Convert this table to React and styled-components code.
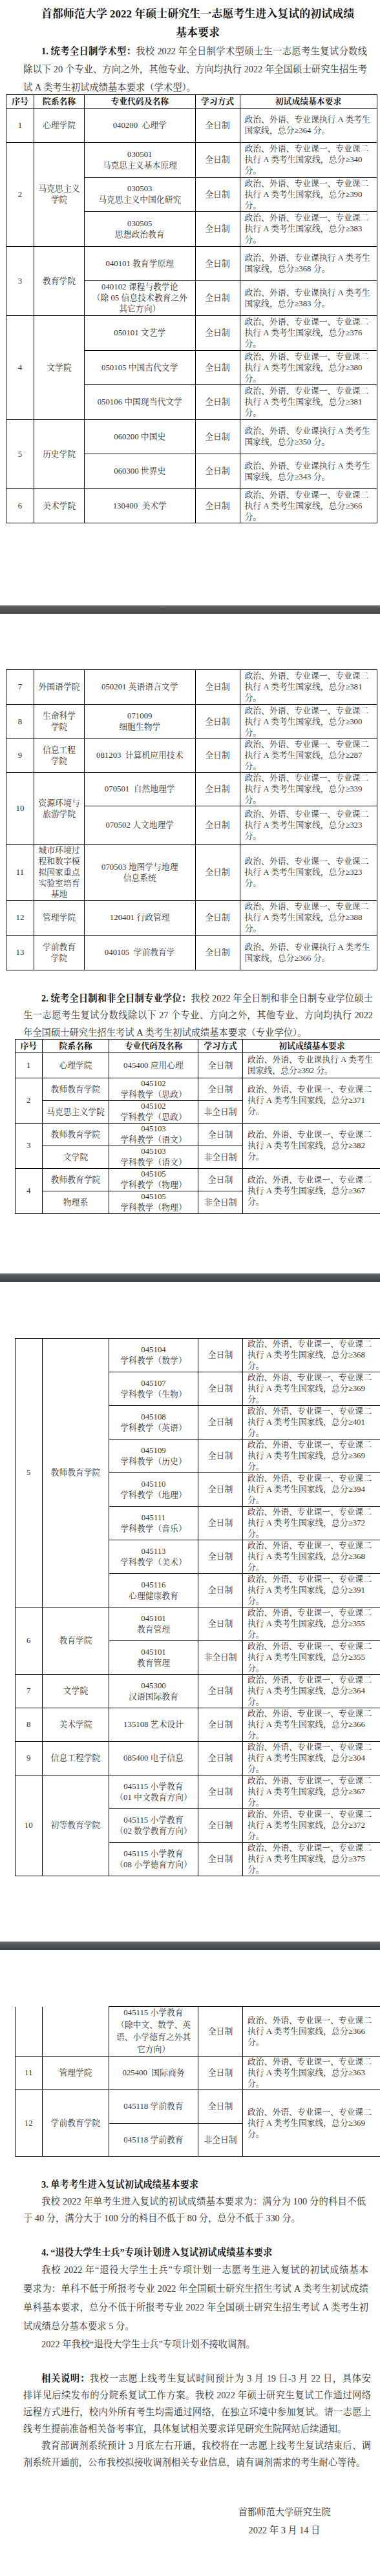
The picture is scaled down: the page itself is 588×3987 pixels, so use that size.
import React from "react";
import styled, { createGlobalStyle } from "styled-components";

const FONT = `"Liberation Serif", "Noto Serif CJK SC", "Noto Sans CJK SC", serif`;

const GlobalStyle = createGlobalStyle`
  html, body { margin: 0; padding: 0; background: #fff; }
  body { overflow-x: hidden; font-family: ${FONT}; color: #333; }
  #root { width: 588px; overflow: hidden; }
`;

const Page = styled.section`
  box-sizing: border-box;
  height: ${(p) => p.$h}px;
  padding-top: ${(p) => p.$pt}px;
  overflow: hidden;
  background: #fff;
`;

const PageGap = styled.div`
  height: 13px;
  background: linear-gradient(to bottom, #6e7174 0%, #53565a 35%, #424548 100%);
`;

const Title = styled.h1`
  margin: 0 0 0 24px;
  width: 564px;
  font-size: 17px;
  line-height: 29px;
  font-weight: 700;
  text-align: center;
  color: #161616;
`;

const Para = styled.div`
  margin: ${(p) => p.$mt || 0}px 0 0 36px;
  width: ${(p) => p.$w || 536}px;
  font-size: 14.3px;
  line-height: ${(p) => p.$lh}px;
  color: #333;
`;

const Ln = styled.div`
  white-space: nowrap;
  text-align: ${(p) => (p.$full ? "justify" : "left")};
  text-align-last: ${(p) => (p.$full ? "justify" : "left")};
  text-indent: ${(p) => (p.$indent ? "28px" : "0")};
`;

const Strong = styled.b`
  font-weight: 700;
  color: #141414;
`;

const Signature = styled.div`
  margin: ${(p) => p.$mt}px 0 0 340px;
  width: 200px;
  text-align: center;
  font-size: 14.3px;
  line-height: 28px;
  color: #333;
`;

const Table = styled.table`
  border-collapse: collapse;
  table-layout: fixed;
  margin: ${(p) => p.$mt || 0}px 0 0 ${(p) => p.$ml}px;
  width: ${(p) => p.$w}px;
  font-size: 12.8px;
  line-height: 17px;
  color: #333;
`;

const Col = styled.col`
  width: ${(p) => p.$w}px;
`;

const Row = styled.tr`
  height: ${(p) => p.$h}px;
`;

const Th = styled.th`
  border: 1px solid #000;
  padding: 0 2px;
  font-weight: 700;
  color: #121212;
  text-align: center;
  vertical-align: middle;
  white-space: nowrap;
`;

const Td = styled.td`
  border: 1px solid #000;
  border-top: ${(p) => (p.$noTop ? "none" : "1px solid #000")};
  padding: 0 ${(p) => (p.$left ? "7px" : "2px")};
  text-align: ${(p) => (p.$left ? "left" : "center")};
  vertical-align: middle;
  white-space: nowrap;
  line-height: ${(p) => p.$lh || 17}px;
  overflow: hidden;
`;

const CellLine = styled.span`
  display: block;
`;

const Lines = ({ l }) => l.map((t, i) => <CellLine key={i}>{t}</CellLine>);

const reqA = (n) => ["政治、外语、专业课执行 A 类考生", `国家线，总分≥${n} 分。`];
const reqB = (n) => ["政治、外语、专业课一、专业课二", `执行 A 类考生国家线，总分≥${n}`, "分。"];

const T1W = [43, 78, 171.5, 69, 212];
const T2W = [42.5, 103, 138, 69, 214];
const sum = (a) => a.reduce((x, y) => x + y, 0);

const Cols = ({ w }) => (
  <colgroup>
    {w.map((v, i) => (
      <Col key={i} $w={v} />
    ))}
  </colgroup>
);

const Head = () => (
  <Row $h={21}>
    <Th>序号</Th>
    <Th>院系名称</Th>
    <Th>专业代码及名称</Th>
    <Th>学习方式</Th>
    <Th>初试成绩基本要求</Th>
  </Row>
);

const Req = ({ l, rowSpan }) => (
  <Td $left rowSpan={rowSpan}>
    <Lines l={l} />
  </Td>
);

const Table1 = ({ children, mt }) => (
  <Table $ml={9} $mt={mt} $w={sum(T1W)}>
    <Cols w={T1W} />
    <tbody>{children}</tbody>
  </Table>
);

const Table2 = ({ children, mt }) => (
  <Table $ml={22.5} $mt={mt} $w={sum(T2W)}>
    <Cols w={T2W} />
    <tbody>{children}</tbody>
  </Table>
);

const FT = "全日制";
const PT = "非全日制";

const TwoLine = (code, name) => <Lines l={[code, name]} />;

export default function App() {
  const p3 = [
    ["045104", "学科教学（数学）", 368],
    ["045107", "学科教学（生物）", 369],
    ["045108", "学科教学（英语）", 401],
    ["045109", "学科教学（历史）", 369],
    ["045110", "学科教学（地理）", 394],
    ["045111", "学科教学（音乐）", 372],
    ["045113", "学科教学（美术）", 368],
    ["045116", "心理健康教育", 391],
  ];
  const H3 = 51.6;

  return (
    <>
      <GlobalStyle />
      {/* Page 1 */}
      <Page $h={937} $pt={6.5}>
        <Title>
          首都师范大学 2022 年硕士研究生一志愿考生进入复试的初试成绩
          <br />
          基本要求
        </Title>
        <Para $w={532} $lh={28}>
          <Ln $full $indent>
            <Strong>1. 统考全日制学术型：</Strong>我校 2022 年全日制学术型硕士生一志愿考生复试分数线
          </Ln>
          <Ln $full>除以下 20 个专业、方向之外，其他专业、方向均执行 2022 年全国硕士研究生招生考</Ln>
          <Ln>试 A 类考生初试成绩基本要求（学术型）。</Ln>
        </Para>
        <Table1 mt={-2.5}>
          <Head />
          <Row $h={53}>
            <Td>1</Td>
            <Td>心理学院</Td>
            <Td>{"040200\u00a0 心理学"}</Td>
            <Td>{FT}</Td>
            <Req l={reqA(364)} />
          </Row>
          <Row $h={54}>
            <Td rowSpan={3}>2</Td>
            <Td rowSpan={3}>
              <Lines l={["马克思主义", "学院"]} />
            </Td>
            <Td>{TwoLine("030501", "马克思主义基本原理")}</Td>
            <Td>{FT}</Td>
            <Req l={reqB(340)} />
          </Row>
          <Row $h={53}>
            <Td>{TwoLine("030503", "马克思主义中国化研究")}</Td>
            <Td>{FT}</Td>
            <Req l={reqB(390)} />
          </Row>
          <Row $h={54}>
            <Td>{TwoLine("030505", "思想政治教育")}</Td>
            <Td>{FT}</Td>
            <Req l={reqB(383)} />
          </Row>
          <Row $h={53}>
            <Td rowSpan={2}>3</Td>
            <Td rowSpan={2}>教育学院</Td>
            <Td>040101 教育学原理</Td>
            <Td>{FT}</Td>
            <Req l={reqA(368)} />
          </Row>
          <Row $h={54}>
            <Td>
              <Lines l={["040102 课程与教学论", "（除 05 信息技术教育之外", "其它方向）"]} />
            </Td>
            <Td>{FT}</Td>
            <Req l={reqA(383)} />
          </Row>
          <Row $h={54}>
            <Td rowSpan={3}>4</Td>
            <Td rowSpan={3}>文学院</Td>
            <Td>050101 文艺学</Td>
            <Td>{FT}</Td>
            <Req l={reqB(376)} />
          </Row>
          <Row $h={53}>
            <Td>050105 中国古代文学</Td>
            <Td>{FT}</Td>
            <Req l={reqB(380)} />
          </Row>
          <Row $h={54}>
            <Td>050106 中国现当代文学</Td>
            <Td>{FT}</Td>
            <Req l={reqB(381)} />
          </Row>
          <Row $h={53}>
            <Td rowSpan={2}>5</Td>
            <Td rowSpan={2}>历史学院</Td>
            <Td>060200 中国史</Td>
            <Td>{FT}</Td>
            <Req l={reqA(350)} />
          </Row>
          <Row $h={54}>
            <Td>060300 世界史</Td>
            <Td>{FT}</Td>
            <Req l={reqA(343)} />
          </Row>
          <Row $h={53}>
            <Td>6</Td>
            <Td>美术学院</Td>
            <Td>{"130400\u00a0 美术学"}</Td>
            <Td>{FT}</Td>
            <Req l={reqB(366)} />
          </Row>
        </Table1>
      </Page>
      <PageGap />

      {/* Page 2 */}
      <Page $h={1021} $pt={86}>
        <Table1>
          <Row $h={54}>
            <Td>7</Td>
            <Td>外国语学院</Td>
            <Td>050201 英语语言文学</Td>
            <Td>{FT}</Td>
            <Req l={reqB(381)} />
          </Row>
          <Row $h={53}>
            <Td>8</Td>
            <Td>
              <Lines l={["生命科学", "学院"]} />
            </Td>
            <Td>{TwoLine("071009", "细胞生物学")}</Td>
            <Td>{FT}</Td>
            <Req l={reqB(300)} />
          </Row>
          <Row $h={52}>
            <Td>9</Td>
            <Td>
              <Lines l={["信息工程", "学院"]} />
            </Td>
            <Td>{"081203\u00a0 计算机应用技术"}</Td>
            <Td>{FT}</Td>
            <Req l={reqB(287)} />
          </Row>
          <Row $h={52}>
            <Td rowSpan={2}>10</Td>
            <Td rowSpan={2}>
              <Lines l={["资源环境与", "旅游学院"]} />
            </Td>
            <Td>{"070501\u00a0 自然地理学"}</Td>
            <Td>{FT}</Td>
            <Req l={reqB(339)} />
          </Row>
          <Row $h={60}>
            <Td>070502 人文地理学</Td>
            <Td>{FT}</Td>
            <Req l={reqB(323)} />
          </Row>
          <Row $h={86}>
            <Td>11</Td>
            <Td>
              <Lines l={["城市环境过", "程和数字模", "拟国家重点", "实验室培育", "基地"]} />
            </Td>
            <Td>
              <Lines l={["070503 地图学与地理", "信息系统"]} />
            </Td>
            <Td>{FT}</Td>
            <Req l={reqB(323)} />
          </Row>
          <Row $h={54}>
            <Td>12</Td>
            <Td>管理学院</Td>
            <Td>120401 行政管理</Td>
            <Td>{FT}</Td>
            <Req l={reqB(388)} />
          </Row>
          <Row $h={54}>
            <Td>13</Td>
            <Td>
              <Lines l={["学前教育", "学院"]} />
            </Td>
            <Td>{"040105\u00a0 学前教育学"}</Td>
            <Td>{FT}</Td>
            <Req l={reqA(366)} />
          </Row>
        </Table1>
        <Para $mt={29.75} $w={541} $lh={26.5}>
          <Ln $full $indent>
            <Strong>2. 统考全日制和非全日制专业学位：</Strong>我校 2022 年全日制和非全日制专业学位硕士
          </Ln>
          <Ln $full>生一志愿考生复试分数线除以下 27 个专业、方向之外，其他专业、方向均执行 2022</Ln>
          <Ln>年全国硕士研究生招生考试 A 类考生初试成绩基本要求（专业学位）。</Ln>
        </Para>
        <Table2 mt={-3.25}>
          <Head />
          <Row $h={39}>
            <Td>1</Td>
            <Td>心理学院</Td>
            <Td>045400 应用心理</Td>
            <Td>{FT}</Td>
            <Req l={reqA(392)} />
          </Row>
          <Row $h={35}>
            <Td rowSpan={2}>2</Td>
            <Td>教师教育学院</Td>
            <Td>{TwoLine("045102", "学科教学（思政）")}</Td>
            <Td>{FT}</Td>
            <Req rowSpan={2} l={reqB(371)} />
          </Row>
          <Row $h={34}>
            <Td>马克思主义学院</Td>
            <Td>{TwoLine("045102", "学科教学（思政）")}</Td>
            <Td>{PT}</Td>
          </Row>
          <Row $h={35}>
            <Td rowSpan={2}>3</Td>
            <Td>教师教育学院</Td>
            <Td>{TwoLine("045103", "学科教学（语文）")}</Td>
            <Td>{FT}</Td>
            <Req rowSpan={2} l={reqB(382)} />
          </Row>
          <Row $h={34}>
            <Td>文学院</Td>
            <Td>{TwoLine("045103", "学科教学（语文）")}</Td>
            <Td>{PT}</Td>
          </Row>
          <Row $h={35}>
            <Td rowSpan={2}>4</Td>
            <Td>教师教育学院</Td>
            <Td>{TwoLine("045105", "学科教学（物理）")}</Td>
            <Td>{FT}</Td>
            <Req rowSpan={2} l={reqB(367)} />
          </Row>
          <Row $h={35}>
            <Td>物理系</Td>
            <Td>{TwoLine("045105", "学科教学（物理）")}</Td>
            <Td>{PT}</Td>
          </Row>
        </Table2>
      </Page>
      <PageGap />

      {/* Page 3 */}
      <Page $h={1021} $pt={87}>
        <Table2>
          {p3.map(([code, name, n], i) => (
            <Row $h={H3} key={code}>
              {i === 0 && <Td rowSpan={8}>5</Td>}
              {i === 0 && <Td rowSpan={8}>教师教育学院</Td>}
              <Td>{TwoLine(code, name)}</Td>
              <Td>{FT}</Td>
              <Req l={reqB(n)} />
            </Row>
          ))}
          <Row $h={H3}>
            <Td rowSpan={2}>6</Td>
            <Td rowSpan={2}>教育学院</Td>
            <Td>{TwoLine("045101", "教育管理")}</Td>
            <Td>{FT}</Td>
            <Req l={reqB(355)} />
          </Row>
          <Row $h={H3}>
            <Td>{TwoLine("045101", "教育管理")}</Td>
            <Td>{PT}</Td>
            <Req l={reqB(355)} />
          </Row>
          <Row $h={H3}>
            <Td>7</Td>
            <Td>文学院</Td>
            <Td>{TwoLine("045300", "汉语国际教育")}</Td>
            <Td>{FT}</Td>
            <Req l={reqB(364)} />
          </Row>
          <Row $h={H3}>
            <Td>8</Td>
            <Td>美术学院</Td>
            <Td>135108 艺术设计</Td>
            <Td>{FT}</Td>
            <Req l={reqB(366)} />
          </Row>
          <Row $h={H3}>
            <Td>9</Td>
            <Td>信息工程学院</Td>
            <Td>085400 电子信息</Td>
            <Td>{FT}</Td>
            <Req l={reqB(304)} />
          </Row>
          <Row $h={H3}>
            <Td rowSpan={3}>10</Td>
            <Td rowSpan={3}>初等教育学院</Td>
            <Td>{TwoLine("045115 小学教育", "（01 中文教育方向）")}</Td>
            <Td>{FT}</Td>
            <Req l={reqB(367)} />
          </Row>
          <Row $h={H3}>
            <Td>{TwoLine("045115 小学教育", "（02 数学教育方向）")}</Td>
            <Td>{FT}</Td>
            <Req l={reqB(372)} />
          </Row>
          <Row $h={H3}>
            <Td>{TwoLine("045115 小学教育", "（08 小学德育方向）")}</Td>
            <Td>{FT}</Td>
            <Req l={reqB(375)} />
          </Row>
        </Table2>
      </Page>
      <PageGap />

      {/* Page 4 */}
      <Page $h={969} $pt={87}>
        <Table2>
          <Row $h={77}>
            <Td $noTop />
            <Td $noTop />
            <Td $lh={19}>
              <Lines l={["045115 小学教育", "（除中文、数学、英", "语、小学德育之外其", "它方向）"]} />
            </Td>
            <Td>{FT}</Td>
            <Req l={reqB(366)} />
          </Row>
          <Row $h={51}>
            <Td>11</Td>
            <Td>管理学院</Td>
            <Td>{"025400\u00a0 国际商务"}</Td>
            <Td>{FT}</Td>
            <Req l={reqB(363)} />
          </Row>
          <Row $h={52}>
            <Td rowSpan={2}>12</Td>
            <Td rowSpan={2}>学前教育学院</Td>
            <Td>045118 学前教育</Td>
            <Td>{FT}</Td>
            <Req rowSpan={2} l={reqB(369)} />
          </Row>
          <Row $h={51}>
            <Td>045118 学前教育</Td>
            <Td>{PT}</Td>
          </Row>
        </Table2>

        <Para $mt={30} $w={530} $lh={26}>
          <Ln $indent>
            <Strong>3. 单考考生进入复试初试成绩基本要求</Strong>
          </Ln>
          <Ln $full $indent>
            我校 2022 年单考生进入复试的初试成绩基本要求为：满分为 100 分的科目不低
          </Ln>
          <Ln>于 40 分，满分大于 100 分的科目不低于 80 分，总分不低于 330 分。</Ln>
        </Para>
        <Para $mt={27} $w={534} $lh={26}>
          <Ln $indent>
            <Strong>4. “退役大学生士兵”专项计划进入复试初试成绩基本要求</Strong>
          </Ln>
        </Para>
        <Para $w={534} $lh={29}>
          <Ln $full $indent>
            我校 2022 年“退役大学生士兵”专项计划一志愿考生进入复试的初试成绩基本
          </Ln>
          <Ln $full>要求为：单科不低于所报考专业 2022 年全国硕士研究生招生考试 A 类考生初试成绩</Ln>
          <Ln $full>单科基本要求，总分不低于所报考专业 2022 年全国硕士研究生招生考试 A 类考生初</Ln>
          <Ln>试成绩总分基本要求 5 分。</Ln>
        </Para>
        <Para $w={534} $lh={26}>
          <Ln $indent>2022 年我校“退役大学生士兵”专项计划不接收调剂。</Ln>
        </Para>
        <Para $mt={26.7} $w={538} $lh={26}>
          <Ln $full $indent>
            <Strong>相关说明：</Strong>我校一志愿上线考生复试时间预计为 3 月 19 日-3 月 22 日，具体安
          </Ln>
          <Ln $full>排详见后续发布的分院系复试工作方案。我校 2022 年硕士研究生复试工作通过网络</Ln>
          <Ln $full>远程方式进行，校内外所有考生均需通过网络，在独立环境中参加复试。请一志愿上</Ln>
          <Ln>线考生提前准备相关备考事宜，具体复试相关要求详见研究生院网站后续通知。</Ln>
        </Para>
        <Para $w={538} $lh={26.3}>
          <Ln $full $indent>
            教育部调剂系统预计 3 月底左右开通，我校将在一志愿上线考生复试结束后、调
          </Ln>
          <Ln>剂系统开通前，公布我校拟接收调剂相关专业信息，请有调剂需求的考生耐心等待。</Ln>
        </Para>
        <Signature $mt={49.7}>
          首都师范大学研究生院
          <br />
          2022 年 3 月 14 日
        </Signature>
      </Page>
    </>
  );
}
